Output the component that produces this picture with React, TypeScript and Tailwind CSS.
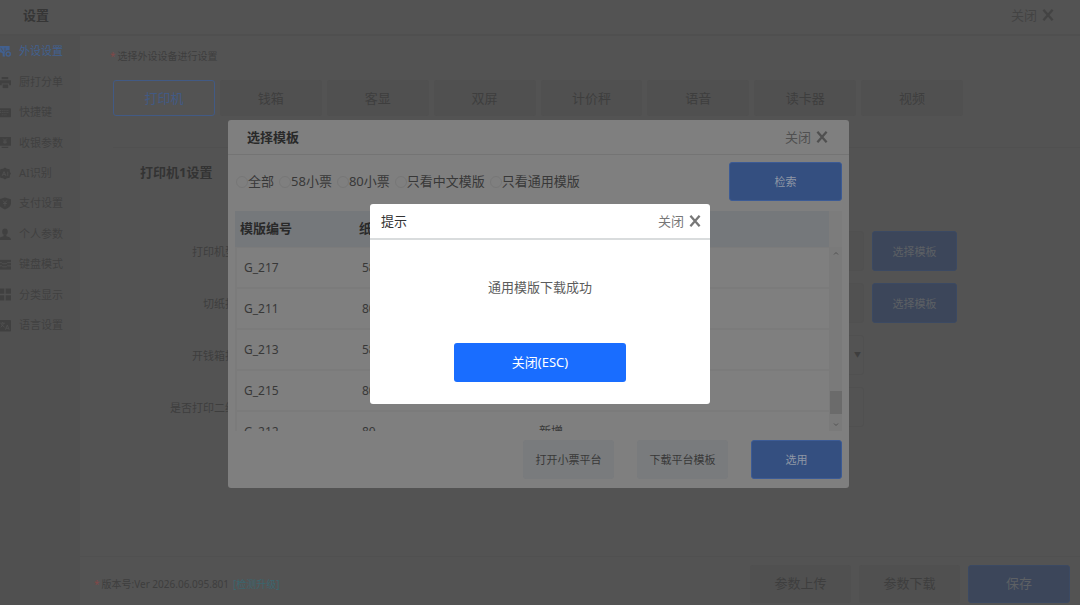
import type { ReactNode } from 'react'

function CloseLabel({ className }: { className: string }) {
  return (
    <button type="button" className={`flex items-center gap-[5px] text-[13px] leading-5 ${className}`}>
      关闭
      <svg viewBox="0 0 12 12" className="h-3 w-3" fill="none" stroke="currentColor" strokeWidth="2.3">
        <path d="M1.400 0.800 L10.600 11.200 M10.600 0.800 L1.400 11.200" />
      </svg>
    </button>
  )
}

function Icon({ children }: { children: ReactNode }) {
  return (
    <svg viewBox="0 0 14 14" className="-ml-[2px] h-[13px] w-[13px] shrink-0" fill="currentColor">
      {children}
    </svg>
  )
}

const CUT = '#505050'

const menu: { label: string; icon: ReactNode }[] = [
  {
    label: '外设设置',
    icon: (
      <>
        <path d="M0 1h12.500v5H9.500L7.500 8.500v4H5V9L3 8H0z" />
        <path d="M3 3l2.500 4M7.500 3v4" stroke={CUT} strokeWidth="0.8" />
        <circle cx="11" cy="9.800" r="2.200" fill={CUT} stroke={CUT} strokeWidth="3.400" />
        <circle cx="11" cy="9.800" r="2.200" fill={CUT} stroke="currentColor" strokeWidth="1.500" />
      </>
    ),
  },
  {
    label: '厨打分单',
    icon: (
      <>
        <path d="M4 1h7v2.500H4zM1 4.500h13v5.500h-2V8H4v2H1z" />
        <path d="M5 9h6v4H5z" />
      </>
    ),
  },
  {
    label: '快捷键',
    icon: (
      <>
        <rect x="0" y="2.500" width="14" height="9.500" rx="1" />
        <path d="M2 5h10M2 7h10M4 9.500h6" stroke={CUT} strokeWidth="0.9" strokeDasharray="1.200 .8" />
      </>
    ),
  },
  {
    label: '收银参数',
    icon: (
      <>
        <path d="M0 1h14v9.500H0zM4 11.500h7V13H4z" />
        <path d="M5.500 2.800l2 2 2-2M7.500 4.800v4M5.500 5.500h4M5.500 7.200h4" fill="none" stroke={CUT} strokeWidth="0.9" />
      </>
    ),
  },
  {
    label: 'AI识别',
    icon: (
      <>
        <path d="M7.500 .5l2 1.500 3 .5.300 3L14 7l-1.200 1.800-.3 2.700-3 .5-2 1.500-2-1.500-3-.5-.3-2.700L1 7l1.200-1.500.3-3 3-.5z" />
        <path d="M4.500 9.500L6.500 5l2 4.500M5.500 8h2M10.500 5v4.500" fill="none" stroke={CUT} strokeWidth="1" />
      </>
    ),
  },
  {
    label: '支付设置',
    icon: (
      <>
        <path d="M7.500 .5l6.500 2v4.300c0 3-2.700 5.200-6.500 6.700C3.700 12 1 9.800 1 6.800V2.500z" />
        <path d="M5.500 3.800l2 2.500 2-2.500M7.500 6.300V10M5.500 7h4" fill="none" stroke={CUT} strokeWidth="1" />
      </>
    ),
  },
  {
    label: '个人参数',
    icon: (
      <>
        <ellipse cx="7.500" cy="4" rx="3" ry="3.400" />
        <path d="M6 7h3v2c2 .5 5 1 5 4H1c0-3 3-3.500 5-4z" />
      </>
    ),
  },
  {
    label: '键盘模式',
    icon: (
      <>
        <rect x="0" y="2" width="14" height="10.500" />
        <path d="M1 5h3l1 1.200h4L10 5h4M1 8.500h3l1 1h4l1-1h4" fill="none" stroke={CUT} strokeWidth="1" />
      </>
    ),
  },
  { label: '分类显示', icon: <path d="M1 .5h5.800v5.800H1zM8.200 .5H14v5.800H8.200zM1 7.700h5.800v5.800H1zM8.200 7.700H14v5.800H8.200z" /> },
  {
    label: '语言设置',
    icon: (
      <>
        <rect x="0" y="1" width="14" height="12.500" rx="1" />
        <path d="M2.500 4.500h5M5 3.200v1.300M3 9l3.500-4.500M3.500 5.500L7 9M8 11.500l2-5 2 5M8.700 10h2.600" fill="none" stroke={CUT} strokeWidth="0.9" />
      </>
    ),
  },
]

const tabs = ['打印机', '钱箱', '客显', '双屏', '计价秤', '语音', '读卡器', '视频']
const filters = ['全部', '58小票', '80小票', '只看中文模版', '只看通用模版']
const rows = [
  ['G_217', '58', '新增'],
  ['G_211', '80', '新增'],
  ['G_213', '58', '新增'],
  ['G_215', '80', '新增'],
  ['G_212', '80', '新增'],
]

function FormRow({ label, id, select, action }: { label: string; id: string; select?: boolean; action?: boolean }) {
  const field = 'h-10 min-w-0 flex-1 appearance-none rounded-[3px] border border-[#505050] px-3 text-[11px]'
  return (
    <div className="flex h-10 items-center">
      <label htmlFor={id} className="w-[134px] shrink-0 pt-[2px] text-right text-[11px]">{label}</label>
      <div className="ml-[9px] flex w-[608px] items-center">
        {select ? (
          <div className="relative flex flex-1">
            <select id={id} className={field} />
            <span className="pointer-events-none absolute top-3 right-[3px] text-[7px] leading-4">▼</span>
          </div>
        ) : (
          <input id={id} className={`${field} ${action ? 'bg-[#515151]' : ''}`} />
        )}
      </div>
      {action && (
        <button type="button" className="ml-2 h-10 w-[85px] shrink-0 rounded-[3px] border border-[#3b4962] bg-[#3c465a] pt-[2px] text-[11px] text-[#5d6064]">
          选择模板
        </button>
      )}
    </div>
  )
}

function TemplateDialog() {
  return (
    <section role="dialog" aria-label="选择模板" className="flex w-[621px] flex-col rounded-[3px] bg-[#7f7f7f] text-[#383838]">
      <header className="flex h-[35px] items-center justify-between border-b border-[#747474] pr-[21px] pl-[19px]">
        <h2 className="pt-[2px] text-[13px] font-bold text-[#292929]">选择模板</h2>
        <CloseLabel className="text-[#505050]" />
      </header>
      <div className="flex items-center justify-between p-[7px]">
        <div className="flex gap-[5px] pl-[1px]">
          {filters.map((f) => (
            <label key={f} className="flex items-center text-[13px]">
              <input type="radio" name="filter" className="h-3 w-3 appearance-none rounded-full border border-[#777777]" />
              {f}
            </label>
          ))}
        </div>
        <button type="button" className="h-[39px] w-[113px] rounded-[3px] border border-[#3c5b95] bg-[#344f80] pt-[2px] text-[11px] text-[#8f97a5]">
          检索
        </button>
      </div>
      <div className="mx-[7px] mt-[3px] flex h-[220px] bg-[#7c7c7c]">
        <div className="flex-1 overflow-hidden">
          <table className="w-full table-fixed border-separate border-spacing-0 text-left">
            <colgroup>
              <col className="w-[119px]" />
              <col className="w-[177px]" />
              <col />
            </colgroup>
            <thead className="bg-[#75787b] text-[13px] text-[#292929]">
              <tr className="h-9">
                <th className="pl-[5px]">模版编号</th>
                <th className="pl-[5px]">纸宽</th>
                <th className="pl-[5px]">状态</th>
              </tr>
            </thead>
            <tbody className="text-[12px]">
              {rows.map((r) => (
                <tr key={r[0]} className="h-[41px]">
                  {r.map((c, i) => (
                    <td key={i} className={`border-y border-[#7b7b7b] bg-[#7f7f7f] ${i === 0 ? 'border-l-2 pl-[7px]' : 'pl-2'}`}>
                      {c}
                    </td>
                  ))}
                </tr>
              ))}
            </tbody>
          </table>
        </div>
        <div className="mt-9 flex w-[13px] flex-col items-center bg-[#7a7a7a] text-[#525252]">
          <svg viewBox="0 0 12 12" className="h-3 w-3" fill="none" stroke="currentColor"><path d="M4 7.500l2-2 2 2" /></svg>
          <div className="mt-auto h-[23px] w-3 bg-[#6b6b6b]" />
          <svg viewBox="0 0 12 12" className="mt-[5px] h-3 w-3" fill="none" stroke="currentColor"><path d="M4 4.500l2 2 2-2" /></svg>
        </div>
      </div>
      <footer className="flex justify-end gap-[23px] px-[7px] py-[9px] text-[11px]">
        <button type="button" className="h-[39px] w-[91px] rounded-[3px] bg-[#797b7d] pt-[2px]">打开小票平台</button>
        <button type="button" className="h-[39px] w-[91px] rounded-[3px] bg-[#797b7d] pt-[2px]">下载平台模板</button>
        <button type="button" className="h-[39px] w-[91px] rounded-[3px] border border-[#3c5b95] bg-[#344f80] pt-[2px] text-[#8f97a5]">选用</button>
      </footer>
    </section>
  )
}

function NoticeDialog() {
  return (
    <section role="alertdialog" aria-label="提示" className="flex w-[340px] flex-col rounded-[3px] bg-white">
      <header className="flex h-9 items-center justify-between border-b-2 border-[#d9dcdd] pr-[9px] pl-[11px]">
        <h2 className="pt-[2px] text-[13px] text-[#333333]">提示</h2>
        <CloseLabel className="text-[#777777]" />
      </header>
      <p className="pt-[37px] text-center text-[13px] leading-5 text-[#5c5c5c]">通用模版下载成功</p>
      <button type="button" className="mx-auto mt-[46px] mb-[22px] h-[39px] w-[172px] rounded-[3px] bg-[#196dff] text-[13px] text-white">
        关闭(ESC)
      </button>
    </section>
  )
}

export default function App() {
  return (
    <div className="relative flex h-screen flex-col overflow-hidden bg-[#535353] font-['Noto_Sans','Noto_Sans_CJK_SC',sans-serif] text-[#3e3e3e]">
      <header className="flex h-9 shrink-0 items-center justify-between border-b-2 border-[#4f4f4f] pr-[26px] pb-[5px] pl-[23px]">
        <h1 className="pt-[2px] text-[13px] font-bold text-[#363636]">设置</h1>
        <CloseLabel className="text-[#434343]" />
      </header>
      <div className="flex min-h-0 flex-1">
        <nav className="w-20 shrink-0 bg-[#505050]">
          <ul className="grid h-[304px] grid-rows-10">
            {menu.map((m, i) => (
              <li key={m.label} className="flex">
                <a href="#" className={`flex items-center gap-2 pt-[1px] text-[11px] ${i === 0 ? 'text-[#42608f]' : 'text-[#404040]'}`}>
                  <Icon>{m.icon}</Icon>
                  {m.label}
                </a>
              </li>
            ))}
          </ul>
        </nav>
        <div className="flex min-w-0 flex-1 flex-col">
          <main className="min-h-0 flex-1 pl-[33px]">
            <p className="-ml-[3px] flex gap-[2px] pt-3 text-[10px] leading-4"><span className="text-[#804848]">*</span>选择外设设备进行设置</p>
            <div className="mt-4 grid max-w-[850px] grid-cols-8 gap-[5px]">
              {tabs.map((t, i) => (
                <button
                  key={t}
                  type="button"
                  className={`h-9 rounded-[3px] pt-[2px] text-[13px] ${i === 0 ? 'border border-[#425a84] text-[#425a84]' : 'bg-[#505050]'}`}
                >
                  {t}
                </button>
              ))}
            </div>
            <hr className="mt-[31px] border-[#505050]" />
            <h2 className="mt-[14px] pl-[27px] text-[13px] leading-5 font-bold text-[#333333]">打印机1设置</h2>
            <form className="mt-[49px] flex flex-col gap-3">
              <FormRow id="model" label="打印机型号" action />
              <FormRow id="cut" label="切纸指令" action />
              <FormRow id="drawer" label="开钱箱指令" select />
              <FormRow id="qr" label="是否打印二维码" />
            </form>
          </main>
          <footer className="flex h-[49px] shrink-0 items-center justify-between border-t border-[#505050] pr-[10px] pl-[14px]">
            <p className="flex gap-[2px] pt-[6px] text-[10px]">
              <span className="text-[#804848]">*</span>
              <span>版本号:Ver 2026.06.095.801</span>
              <a href="#" className="ml-[2px] text-[#3c656e]">[检测升级]</a>
            </p>
            <div className="flex gap-2 pt-[6px] text-[13px]">
              <button type="button" className="h-[38px] w-[101px] rounded-[3px] bg-[#505050]">参数上传</button>
              <button type="button" className="h-[38px] w-[101px] rounded-[3px] bg-[#505050]">参数下载</button>
              <button type="button" className="h-[38px] w-[102px] rounded-[3px] border border-[#3b4962] bg-[#3c465a] text-[#5d6064]">保存</button>
            </div>
          </footer>
        </div>
      </div>
      <div className="absolute inset-0 flex items-center justify-center pt-[3px] pr-[3px]">
        <TemplateDialog />
      </div>
      <div className="absolute inset-0 flex items-center justify-center pt-[3px]">
        <NoticeDialog />
      </div>
    </div>
  )
}
